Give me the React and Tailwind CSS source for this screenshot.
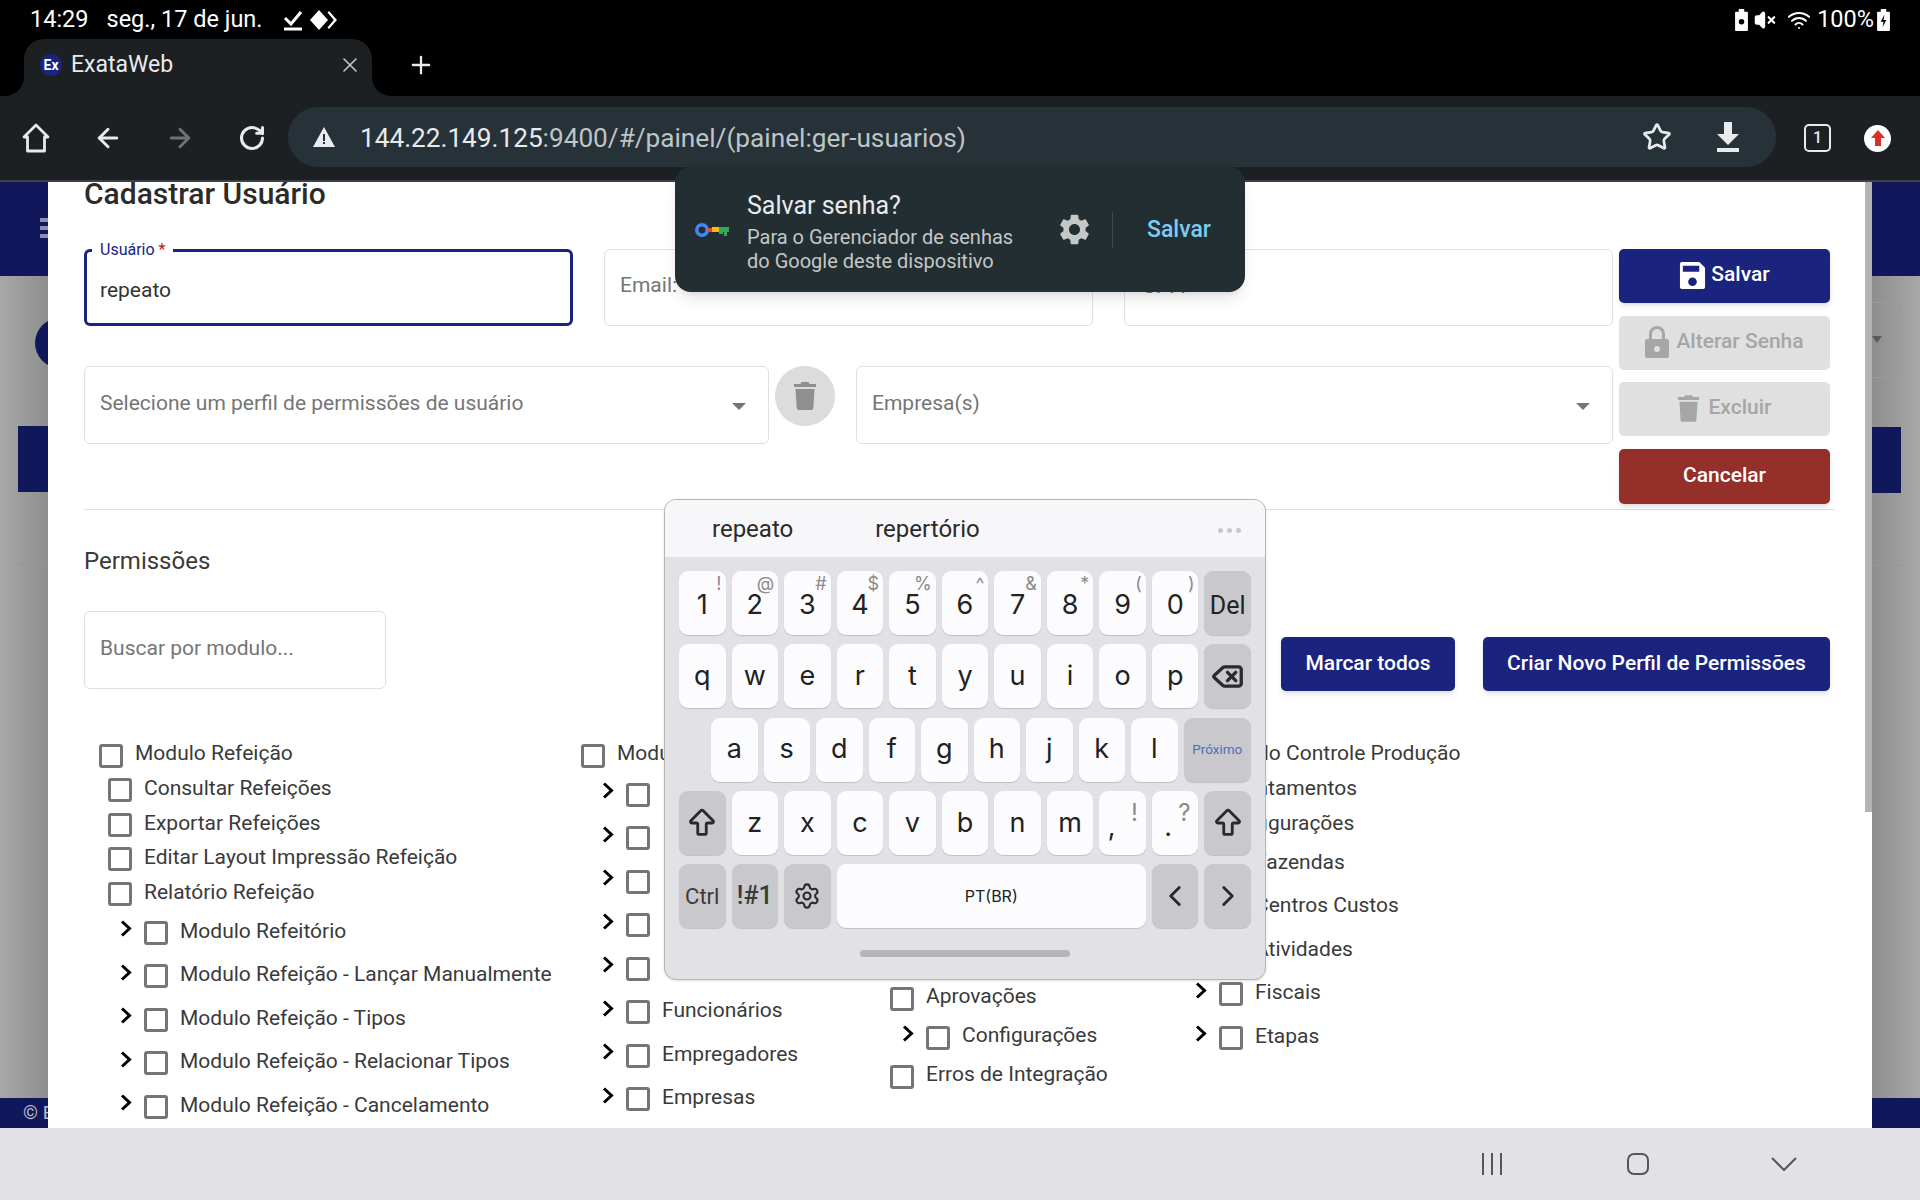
import { ArrowBigUp, ArrowLeft, ArrowRight, ChevronLeft, ChevronRight, Delete, RotateCw, Settings, Star, VolumeX, Wifi, X, Plus } from 'lucide-react';
import { MdSettings } from 'react-icons/md';

const NAVY = 'bg-[#1a237e]';

function Checkbox() {
  return <span className="block w-[24px] h-[24px] shrink-0 rounded-[3px] border-[3px] border-[#757575] bg-white" />;
}

function Arrow() {
  return (
    <svg viewBox="0 0 12 17" className="w-[12px] h-[17px] shrink-0 -mt-[8px] mr-[12px]" fill="none" stroke="black" strokeWidth="3">
      <path d="M2 1.500l7.500 7-7.500 7" />
    </svg>
  );
}

// level 0 = module, 1 = plain child, 2 = child with expand arrow
function Row({ level = 0, label, h = '' }) {
  if (level === 2) {
    return (
      <div className={`flex items-center h-[43.5px] pl-[21px] ${h}`}>
        <Arrow />
        <Checkbox />
        {label && <span className="ml-[12px] -mt-[3px] whitespace-nowrap">{label}</span>}
      </div>
    );
  }
  return (
    <div className={`flex items-center ${level === 1 ? 'h-[34.5px] pl-[9px]' : 'h-[35px]'} ${h}`}>
      <Checkbox />
      <span className="ml-[12px] -mt-[3px] whitespace-nowrap">{label}</span>
    </div>
  );
}

function Field({ label, textClass = '-mt-[3px]' }) {
  return (
    <div className="w-[489px] h-[77px] rounded-[6px] border border-[#e0e0e0] flex items-center px-[15px] text-[21px] text-[#757575]">
      <span className={textClass}>{label}</span>
    </div>
  );
}

function SelectField({ label, className }) {
  return (
    <div className={`h-[78px] rounded-[6px] border border-[#e0e0e0] flex items-center justify-between pl-[15px] pr-[22px] text-[21px] text-[#757575] ${className}`}>
      <span className="-mt-[2px]">{label}</span>
      <span className="w-0 h-0 border-x-[7px] border-x-transparent border-t-[7px] border-t-[#757575] mt-[2px]" />
    </div>
  );
}

function TrashIcon({ className }) {
  return (
    <svg viewBox="0 0 22 28" className={className} fill="currentColor">
      <path d="M7.500 0h7l1 2H22v3H0V2h6.500zM1.500 7h19l-1.200 19a2 2 0 0 1-2 2H4.700a2 2 0 0 1-2-2z" />
    </svg>
  );
}

function FormButton({ children, className = '' }) {
  return (
    <button className={`w-full rounded-[5px] flex items-center justify-center text-[21px] font-medium pb-[2px] ${className}`}>
      {children}
    </button>
  );
}

function Strip({ side }) {
  const right = side === 'right';
  return (
    <div className="w-[48px] shrink-0 flex flex-col">
      <div className="h-[94px] bg-[#10175a] flex items-center">
        {!right && (
          <div className="ml-[40px] w-[8px] flex flex-col gap-[4px] -mt-[2px]">
            <span className="h-[4px] bg-[#8d8fa8]" />
            <span className="h-[4px] bg-[#8d8fa8]" />
            <span className="h-[4px] bg-[#8d8fa8]" />
          </div>
        )}
      </div>
      <div className={`flex-1 flex flex-col ${right ? 'bg-linear-to-r from-[#8e8e8e] to-[#a8a8a8] items-start' : 'bg-linear-to-l from-[#8e8e8e] to-[#a8a8a8] items-end'}`}>
        {right ? (
          <div className="mt-[26px] h-[76px] w-[29px] rounded-r-[6px] border border-l-0 border-[#9a9a9a] flex items-center">
            <span className="w-0 h-0 border-x-[5px] border-x-transparent border-t-[7px] border-t-[#5a5a5a] -mt-[2px]" />
          </div>
        ) : (
          <div className="mt-[42px] h-[50px] w-[13px] overflow-hidden mb-[14px]">
            <div className="w-[50px] h-[50px] rounded-full bg-[#10175a]" />
          </div>
        )}
        <div className={`${right ? 'mt-[49px] w-[29px]' : 'mt-[44px] w-[30px]'} h-[66px] bg-[#10175a]`} />
        <div className={`mt-[72px] h-px bg-[#959595] ${right ? 'w-[29px]' : 'w-[30px]'}`} />
      </div>
      <div className="h-[30px] bg-[#10175a] text-[#b9bbd0] text-[19px] leading-[30px] pl-[23px] overflow-hidden whitespace-nowrap">
        {!right && '© E'}
      </div>
    </div>
  );
}

function Key({ label, sup, dark, size = 'text-[27px]', supClass = 'top-[2px] right-[4px] text-[18px] leading-[22px]', className = '', children }) {
  return (
    <div className={`relative h-[64px] rounded-[9px] flex items-center justify-center text-[#222] shadow-[0_1px_1px_rgba(0,0,0,0.15)] ${dark ? 'bg-[#c8c8cd]' : 'bg-[#fcfcfe]'} ${size} ${className}`}>
      {label}
      {children}
      {sup && <span className={`absolute text-[#8a8a8a] ${supClass}`}>{sup}</span>}
    </div>
  );
}

const numbers = [['1', '!'], ['2', '@'], ['3', '#'], ['4', '$'], ['5', '%'], ['6', '^'], ['7', '&'], ['8', '*'], ['9', '('], ['0', ')']];

function Keyboard() {
  const bigSup = 'top-[8px] right-[8px] text-[24px] leading-[28px]';
  return (
    <div className="absolute left-[664px] top-[317px] w-[602px] h-[481px] rounded-[12px] border border-[#b5b5b5] bg-[#e2e2e6] overflow-hidden shadow-sm">
      <div className="h-[57px] bg-[#f7f7f9] flex items-center text-[24px] text-[#2a2a2a] relative">
        <span className="ml-[47px]">repeato</span>
        <span className="ml-[82px]">repertório</span>
        <div className="absolute left-[553px] top-[28px] flex gap-[4px]">
          <span className="w-[5px] h-[5px] rounded-full bg-[#c8c8cc]" />
          <span className="w-[5px] h-[5px] rounded-full bg-[#c8c8cc]" />
          <span className="w-[5px] h-[5px] rounded-full bg-[#c8c8cc]" />
        </div>
      </div>
      <div className="px-[14px] pt-[14px] flex flex-col gap-y-[9.300px] font-['Inter',sans-serif]">
        <div className="grid grid-cols-11 gap-x-[6px]">
          {numbers.map(([n, s]) => <Key key={n} label={n} sup={s} className="pt-[5px]" />)}
          <Key label="Del" dark size="text-[25px]" className="font-['Roboto',sans-serif] pt-[5px]" />
        </div>
        <div className="grid grid-cols-11 gap-x-[6px]">
          {'qwertyuiop'.split('').map((k) => <Key key={k} label={k} />)}
          <Key dark><Delete size={33} strokeWidth={2.4} className="text-[#2a2a2a]" /></Key>
        </div>
        <div className="flex gap-x-[6px] pl-[32px]">
          {'asdfghjkl'.split('').map((k) => <Key key={k} label={k} className="w-[46.500px] shrink-0" />)}
          <Key label="Próximo" dark size="text-[13.500px]" className="flex-1 !text-[#4c6fbf] font-['Roboto',sans-serif]" />
        </div>
        <div className="grid grid-cols-11 gap-x-[6px]">
          <Key dark><ArrowBigUp size={34} strokeWidth={2} className="text-[#2a2a2a]" /></Key>
          {'zxcvbnm'.split('').map((k) => <Key key={k} label={k} />)}
          <Key label="," sup="!" supClass={bigSup} className="pt-[8px] pr-[22px]" />
          <Key label="." sup="?" supClass={bigSup} className="pt-[8px] pr-[14px]" />
          <Key dark><ArrowBigUp size={34} strokeWidth={2} className="text-[#2a2a2a]" /></Key>
        </div>
        <div className="grid grid-cols-11 gap-x-[6px]">
          <Key label="Ctrl" dark size="text-[22px]" className="font-['Roboto',sans-serif] !text-[#3a3a3a]" />
          <Key label="!#1" dark size="text-[25px]" className="font-['Roboto',sans-serif] font-medium !text-[#3a3a3a]" />
          <Key dark><Settings size={28} strokeWidth={1.8} className="text-[#2a2a2a]" /></Key>
          <Key label="PT(BR)" size="text-[16px]" className="col-span-6" />
          <Key dark><ChevronLeft size={34} strokeWidth={2} className="text-[#2a2a2a]" /></Key>
          <Key dark><ChevronRight size={34} strokeWidth={2} className="text-[#2a2a2a]" /></Key>
        </div>
      </div>
      <div className="mt-[22px] mx-auto w-[210px] h-[7px] rounded-full bg-[#b4b4b9]" />
    </div>
  );
}

function SavePasswordBubble() {
  return (
    <div className="absolute left-[675px] -top-[15px] w-[570px] h-[125px] rounded-[16px] bg-[#232e33] shadow-lg flex items-center text-white">
      <svg viewBox="0 0 34 18" className="w-[34px] h-[18px] ml-[20px] shrink-0">
        <circle cx="7" cy="9" r="5.200" fill="none" stroke="#4285f4" strokeWidth="3.600" />
        <rect x="13" y="7" width="8" height="4" fill="#ea4335" />
        <rect x="17" y="6" width="7" height="5" fill="#fbbc04" />
        <path d="M24 6h10v5h-2v4h-3v-4h-1v2h-4z" fill="#34a853" />
      </svg>
      <div className="ml-[18px] w-[304px] pt-[4px] shrink-0">
        <div className="text-[25px] leading-[32px] mb-[3px] text-[#e8eaed]">Salvar senha?</div>
        <div className="text-[20px] leading-[24px] text-[#c4c7c5]">Para o Gerenciador de senhas</div>
        <div className="text-[20px] leading-[24px] text-[#c4c7c5]">do Google deste dispositivo</div>
      </div>
      <MdSettings size={37} className="text-[#c4c7c5] ml-[5px] shrink-0" />
      <span className="w-px h-[36px] bg-[#3e4a50] ml-[19px]" />
      <span className="ml-[34px] pt-[2px] text-[23px] font-medium text-[#7ccbf0]">Salvar</span>
    </div>
  );
}

function TopBars() {
  return (
    <>
      <div className="h-[96px] bg-black text-white shrink-0">
        <div className="h-[39px] flex items-center justify-between pl-[30px] pr-[30px] text-[23.500px]">
          <div className="flex items-center">
            <span>14:29</span>
            <span className="ml-[18px]">seg., 17 de jun.</span>
            <svg viewBox="0 0 20 22" className="w-[20px] h-[22px] ml-[20px]" fill="none" stroke="white">
              <path d="M2 9l6 6L18 3" strokeWidth="3" />
              <path d="M1 20h18" strokeWidth="3" />
            </svg>
            <svg viewBox="0 0 28 20" className="w-[28px] h-[20px] ml-[7px]" fill="white">
              <path d="M9 0l9 10-9 10L0 10z" />
              <path d="M19 1l8 9-8 9-1.500-1.500L23.800 10l-6.300-7.500z" />
            </svg>
          </div>
          <div className="flex items-center">
            <svg viewBox="0 0 14 24" className="w-[13px] h-[22px]"><path d="M4 0h6v3h3a1 1 0 0 1 1 1v19a1 1 0 0 1-1 1H1a1 1 0 0 1-1-1V4a1 1 0 0 1 1-1h3z" fill="white" /><circle cx="7" cy="14" r="3" fill="black" /></svg>
            <VolumeX size={22} fill="white" strokeWidth={2.4} className="ml-[6px]" />
            <Wifi size={24} strokeWidth={2} className="ml-[11px]" />
            <span className="ml-[6px]">100%</span>
            <svg viewBox="0 0 14 24" className="w-[13px] h-[22px] ml-[3px]"><path d="M4 0h6v3h3a1 1 0 0 1 1 1v19a1 1 0 0 1-1 1H1a1 1 0 0 1-1-1V4a1 1 0 0 1 1-1h3z" fill="white" /><path d="M8 6l-4 8h3l-1 6 4-8H7z" fill="black" /></svg>
          </div>
        </div>
        <div className="flex items-center h-[57px]">
          <div className="relative ml-[24px] w-[348px] h-full rounded-t-[20px] bg-[#1c2023] flex items-center pl-[16px] pr-[10px] pb-[5px]">
            <svg viewBox="0 0 20 20" className="absolute -left-[20px] bottom-0 w-[20px] h-[20px]"><path d="M20 0v20H0C12 20 20 12 20 0z" fill="#1c2023" /></svg>
            <svg viewBox="0 0 20 20" className="absolute -right-[20px] bottom-0 w-[20px] h-[20px]"><path d="M0 0v20h20C8 20 0 12 0 0z" fill="#1c2023" /></svg>
            <span className={`w-[22px] h-[22px] rounded-full ${NAVY} flex items-center justify-center text-[14px] font-bold text-white`}>Ex</span>
            <span className="ml-[9px] text-[23px] text-[#e8eaed]">ExataWeb</span>
            <X size={24} strokeWidth={1.6} className="ml-auto text-[#c4c7c5]" />
          </div>
          <Plus size={28} strokeWidth={2} className="ml-[35px] mb-[5px] text-[#e8eaed]" />
        </div>
      </div>
      <div className="h-[86px] shrink-0 bg-[#1c2023] border-b-2 border-[#3c4147] flex items-center text-[#e8eaed]">
        <svg viewBox="0 0 28 30" className="w-[28px] h-[30px] ml-[22px]" fill="none" stroke="currentColor" strokeWidth="2.800" strokeLinejoin="round">
          <path d="M14 2L2 14h3.500v14h17V14H26z" />
        </svg>
        <ArrowLeft size={30} strokeWidth={2.4} className="ml-[43px]" />
        <ArrowRight size={30} strokeWidth={2.4} className="ml-[42px] text-[#6f7275]" />
        <RotateCw size={28} strokeWidth={2.6} className="ml-[43px]" />
        <div className="ml-[22px] w-[1488px] h-[60px] -mt-[3px] rounded-full bg-[#263238] flex items-center">
          <svg viewBox="0 0 22 20" className="w-[22px] h-[20px] ml-[25px]"><path d="M11 0l11 20H0z" fill="#e8eaed" /><path d="M10 7h2v7h-2zM10 15h2v2h-2z" fill="#263238" /></svg>
          <span className="ml-[25px] mt-[5px] text-[26.200px] text-[#e8eaed] whitespace-nowrap">144.22.149.125<span className="text-[#bfc4c6]">:9400/#/painel/(painel:ger-usuarios)</span></span>
          <Star size={30} strokeWidth={2.2} className="ml-auto" />
          <svg viewBox="0 0 24 30" className="w-[24px] h-[30px] ml-[44px] mr-[36px]" fill="currentColor">
            <path d="M8 0h8v12h7L12 23 1 12h7zM1 26h22v4H1z" />
          </svg>
        </div>
        <div className="ml-[28px] w-[27px] h-[28px] rounded-[5px] border-[2.500px] border-[#e8eaed] flex items-center justify-center text-[16px] font-medium">1</div>
        <div className="ml-[33px] w-[27px] h-[27px] rounded-full bg-white flex items-center justify-center">
          <svg viewBox="0 0 14 16" className="w-[14px] h-[16px]"><path d="M7 0l7 8H10v8H4V8H0z" fill="#d93025" /></svg>
        </div>
      </div>
    </>
  );
}

function UserForm() {
  return (
    <div className="flex gap-[6px]">
      <div className="w-[1529px] flex flex-col gap-[40px]">
        <div className="flex justify-between">
          <div className="relative w-[489px] h-[77px] rounded-[6px] border-[3px] border-[#1a237e] flex items-center pl-[13px] pt-[7px] text-[21px] text-[#333]">
            <span className="absolute left-[5px] -top-[12px] bg-white px-[8px] text-[16px] leading-[20px] text-[#1a237e]">Usuário <span className="text-[#b71c1c]">*</span></span>
            repeato
          </div>
          <Field label="Email:" />
          <Field label="CPF:" textClass="-mt-[1px] pl-[2px]" />
        </div>
        <div className="flex items-start">
          <SelectField label="Selecione um perfil de permissões de usuário" className="w-[685px]" />
          <div className="w-[60px] h-[60px] ml-[6px] rounded-full bg-[#dcdcdc] flex items-center justify-center text-[#8f8f8f]">
            <TrashIcon className="w-[22px] h-[28px]" />
          </div>
          <SelectField label="Empresa(s)" className="flex-1 ml-[21px]" />
        </div>
      </div>
      <div className="w-[211px] flex flex-col">
        <FormButton className={`h-[54px] ${NAVY} text-white shadow-md`}>
          <svg viewBox="0 0 26 28" className="w-[27px] h-[27px] mr-[5px]" fill="white">
            <path fillRule="evenodd" d="M2 0h18l6 6v20a2 2 0 0 1-2 2H2a2 2 0 0 1-2-2V2a2 2 0 0 1 2-2zM3 4v6h17V4zM13 16a4.500 4.500 0 1 0 0 9 4.500 4.500 0 0 0 0-9z" />
          </svg>
          Salvar
        </FormButton>
        <FormButton className="h-[54px] mt-[13px] bg-[#e0e0e0] text-[#a6a6a6]">
          <svg viewBox="0 0 24 32" className="w-[24px] h-[32px] mr-[7px]" fill="#a6a6a6">
            <path fillRule="evenodd" d="M12 0a8 8 0 0 1 8 8v5h2a2 2 0 0 1 2 2v15a2 2 0 0 1-2 2H2a2 2 0 0 1-2-2V15a2 2 0 0 1 2-2h2V8a8 8 0 0 1 8-8zm0 3a5 5 0 0 0-5 5v5h10V8a5 5 0 0 0-5-5zm0 17a3 3 0 1 0 0 6 3 3 0 0 0 0-6z" />
          </svg>
          Alterar Senha
        </FormButton>
        <FormButton className="h-[54px] mt-[12px] bg-[#e0e0e0] text-[#a6a6a6]">
          <TrashIcon className="w-[21px] h-[27px] mr-[10px]" />
          Excluir
        </FormButton>
        <FormButton className="h-[55px] mt-[13px] bg-[#952f2a] text-white shadow-md">Cancelar</FormButton>
      </div>
    </div>
  );
}

function PermissionTree() {
  return (
    <div className="mt-[47px] ml-[15px] grid grid-cols-[482px_300px_293px_1fr] text-[21px] text-[#3a3a3a]">
      <div>
        <Row label="Modulo Refeição" />
        <Row level={1} label="Consultar Refeições" />
        <Row level={1} label="Exportar Refeições" />
        <Row level={1} label="Editar Layout Impressão Refeição" />
        <Row level={1} label="Relatório Refeição" />
        <Row level={2} label="Modulo Refeitório" />
        <Row level={2} label="Modulo Refeição - Lançar Manualmente" />
        <Row level={2} label="Modulo Refeição - Tipos" />
        <Row level={2} label="Modulo Refeição - Relacionar Tipos" />
        <Row level={2} label="Modulo Refeição - Cancelamento" />
      </div>
      <div>
        <Row label="Modulo" />
        <Row level={2} />
        <Row level={2} />
        <Row level={2} />
        <Row level={2} />
        <Row level={2} />
        <Row level={2} label="Funcionários" />
        <Row level={2} label="Empregadores" />
        <Row level={2} label="Empresas" />
      </div>
      <div className="pt-[241px]">
        <Row level={1} label="Aprovações" h="!h-[39px]" />
        <Row level={2} label="Configurações" h="!h-[39px]" />
        <Row level={1} label="Erros de Integração" h="!h-[39px]" />
      </div>
      <div>
        <Row label="Modulo Controle Produção" />
        <Row level={1} label="Apontamentos" />
        <Row level={1} label="Configurações" />
        <Row level={2} label="Fazendas" />
        <Row level={2} label="Centros Custos" />
        <Row level={2} label="Atividades" />
        <Row level={2} label="Fiscais" />
        <Row level={2} label="Etapas" />
      </div>
    </div>
  );
}

export default function App() {
  return (
    <div className="w-[1920px] h-[1200px] flex flex-col overflow-hidden bg-white font-['Roboto',sans-serif]">
      <TopBars />

      <div className="relative flex-1 flex min-h-0">
        <Strip side="left" />
        <div className="relative flex-1 bg-white overflow-hidden pl-[36px] pr-[37px]">
          <div className="absolute right-0 top-0 w-[7px] h-[630px] bg-[#b3b3b3]" />
          <h2 className="-mt-[5px] mb-[38px] text-[30px] leading-[34px] font-medium text-[#2b2b2b]">Cadastrar Usuário</h2>
          <UserForm />
          <div className="mt-[5px] h-px bg-[#e0e0e0]" />
          <div className="mt-[36px] text-[24px] leading-[30px] text-[#3a3a3a]">Permissões</div>
          <div className="mt-[35px] flex items-start justify-between pr-[5px]">
            <div className="w-[302px] h-[78px] rounded-[6px] border border-[#e0e0e0] flex items-center px-[15px] text-[21px] text-[#757575]">
              <span className="-mt-[2px]">Buscar por modulo...</span>
            </div>
            <div className="flex gap-[28px] mt-[26px]">
              <button className={`w-[174px] h-[54px] rounded-[5px] ${NAVY} text-white text-[21px] font-medium shadow-md pb-[1px]`}>Marcar todos</button>
              <button className={`w-[347px] h-[54px] rounded-[5px] ${NAVY} text-white text-[21px] font-medium shadow-md pb-[1px]`}>Criar Novo Perfil de Permissões</button>
            </div>
          </div>
          <PermissionTree />
        </div>
        <Strip side="right" />

        <SavePasswordBubble />
        <Keyboard />
      </div>

      <div className="h-[72px] shrink-0 bg-[#e2e2e6] relative flex items-center text-[#55565a]">
        <div className="ml-[1482px] flex gap-[7px]">
          <span className="w-[2px] h-[22px] bg-[#55565a]" />
          <span className="w-[2px] h-[22px] bg-[#55565a]" />
          <span className="w-[2px] h-[22px] bg-[#55565a]" />
        </div>
        <span className="ml-[125px] w-[22px] h-[22px] rounded-[7px] border-2 border-[#55565a]" />
        <svg viewBox="0 0 26 14" className="ml-[122px] w-[26px] h-[14px]" fill="none" stroke="#55565a" strokeWidth="2"><path d="M1 1l12 12L25 1" /></svg>
      </div>
    </div>
  );
}
